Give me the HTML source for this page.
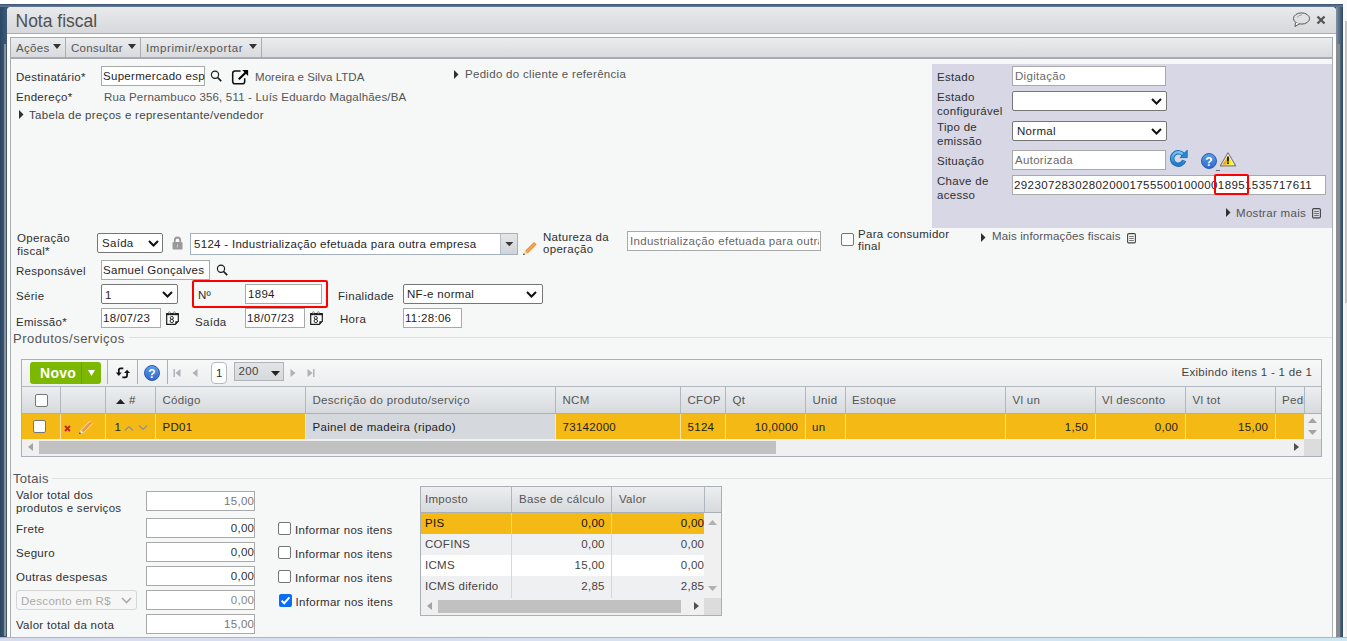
<!DOCTYPE html>
<html><head><meta charset="utf-8"><title>Nota fiscal</title>
<style>
html,body{margin:0;padding:0;}
body{width:1347px;height:641px;position:relative;overflow:hidden;font-family:"Liberation Sans",sans-serif;background:#fff;}
body>div{position:absolute;}
.t{white-space:nowrap;}
svg{display:block;}
</style></head><body>
<div style="left:0px;top:0px;width:1347px;height:641px;background:#fff;"></div>
<div style="left:0px;top:4px;width:1343px;height:633px;background:linear-gradient(90deg,#2b4766 0px,#3d5877 6px,#2b4766 100%);"></div>
<div style="left:0px;top:4px;width:1343px;height:3px;background:linear-gradient(180deg,#3b5574,#6a7d92);"></div>
<div style="left:4px;top:44px;width:2px;height:592px;background:#8f9194;"></div>
<div style="left:1336px;top:7px;width:7px;height:630px;background:linear-gradient(90deg,#8293a5,#2b4766);"></div>
<div style="left:1336px;top:44px;width:3.5px;height:593px;background:#8a8b8d;"></div>
<div style="left:1343px;top:0px;width:4px;height:641px;background:#fafafa;"></div>
<div style="left:1345px;top:21px;width:2px;height:620px;background:#efefef;"></div>
<div style="left:1345px;top:21px;width:2px;height:282px;background:#c4c4c4;"></div>
<div style="left:0px;top:637px;width:1347px;height:1px;background:#aeb5c0;"></div>
<div style="left:0px;top:638px;width:1347px;height:3px;background:linear-gradient(90deg,#d9dcef,#d6e2f1 50%,#cde8f3);"></div>
<div style="left:7px;top:7px;width:1329px;height:630px;background:#fff;border-radius:4px 4px 0 0;"></div>
<div style="left:7px;top:7px;width:1329px;height:26px;background:linear-gradient(180deg,#e9eaec,#d6d8db);border-radius:4px 4px 0 0;border-bottom:1px solid #a9adb3;"></div>
<div class="t" style="left:15.5px;top:11.44px;font-size:17.5px;line-height:21px;color:#505050;letter-spacing:0px;">Nota fiscal</div>
<div style="left:1292px;top:12px;width:19px;height:16px"><svg width="19" height="16" viewBox="0 0 19 16"><ellipse cx="9.5" cy="6.5" rx="8" ry="5.6" fill="none" stroke="#555" stroke-width="1"/><path d="M3.5 10.5 L3 14.5 L7.5 11.8" fill="#fff" stroke="#555" stroke-width="1"/><path d="M5 5.5 Q7 3 10 2.8" fill="none" stroke="#888" stroke-width="0.8"/></svg></div>
<div style="left:1316px;top:15px;width:10px;height:10px"><svg width="10" height="10" viewBox="0 0 10 10"><path d="M1.5 1.5 L8.5 8.5 M8.5 1.5 L1.5 8.5" stroke="#555" stroke-width="2.3"/></svg></div>
<div style="left:10px;top:37px;width:1323px;height:22px;background:linear-gradient(180deg,#ebecee,#d8dadd);border:1px solid #a6abb2;box-sizing:border-box;border-bottom-width:2px;"></div>
<div style="left:65px;top:38px;width:1px;height:19px;background:#a9aeb4;"></div>
<div style="left:140px;top:38px;width:1px;height:19px;background:#a9aeb4;"></div>
<div style="left:261px;top:38px;width:1px;height:19px;background:#a9aeb4;"></div>
<div class="t" style="left:16px;top:41.32px;font-size:11.5px;line-height:14px;color:#555;letter-spacing:0.3px;">Ações</div>
<div style="left:53px;top:44px;width:8px;height:5px"><svg width="8" height="5" viewBox="0 0 8 5"><path d="M0 0 L8 0 L4 5 Z" fill="#333"/></svg></div>
<div class="t" style="left:71px;top:41.32px;font-size:11.5px;line-height:14px;color:#555;letter-spacing:0.3px;">Consultar</div>
<div style="left:128px;top:44px;width:8px;height:5px"><svg width="8" height="5" viewBox="0 0 8 5"><path d="M0 0 L8 0 L4 5 Z" fill="#333"/></svg></div>
<div class="t" style="left:146px;top:41.32px;font-size:11.5px;line-height:14px;color:#555;letter-spacing:0.6px;">Imprimir/exportar</div>
<div style="left:249px;top:44px;width:8px;height:5px"><svg width="8" height="5" viewBox="0 0 8 5"><path d="M0 0 L8 0 L4 5 Z" fill="#333"/></svg></div>
<div style="left:10px;top:59px;width:1323px;height:578px;background:#f6f7f7;border-left:1px solid #a9aeb4;border-right:1px solid #a9aeb4;box-sizing:border-box;"></div>
<div class="t" style="left:16px;top:70.02px;font-size:11.5px;line-height:14px;color:#303030;letter-spacing:0.3px;">Destinatário*</div>
<div style="left:101px;top:66px;width:104px;height:20px;background:#fff;border:1px solid #a9a9a9;box-sizing:border-box;"></div>
<div class="t" style="left:103px;top:69.22px;font-size:11.5px;line-height:14px;color:#1e1e1e;letter-spacing:0.3px;">Supermercado esp</div>
<div style="left:210px;top:70px;width:12px;height:12px"><svg width="12" height="12" viewBox="0 0 12 12"><circle cx="5" cy="4.7" r="3.6" fill="none" stroke="#1a1a1a" stroke-width="1.15"/><path d="M7.6 7.5 L11.2 11.1" stroke="#1a1a1a" stroke-width="1.7"/></svg></div>
<div style="left:226px;top:64px;width:26px;height:24px"><svg width="26" height="24" viewBox="0 0 26 24"><path d="M14.6 7 H9 Q6.7 7 6.7 9.3 V17.4 Q6.7 19.7 9 19.7 H16.4 Q18.7 19.7 18.7 17.4 V14.2" fill="none" stroke="#111" stroke-width="1.55"/><path d="M12.8 15.3 L19.8 8.6" stroke="#000" stroke-width="2.1"/><path d="M16.2 6 H22.1 V12 Z" fill="#000"/></svg></div>
<div class="t" style="left:255px;top:70.02px;font-size:11.5px;line-height:14px;color:#555;letter-spacing:0.05px;">Moreira e Silva LTDA</div>
<div class="t" style="left:16px;top:90.02px;font-size:11.5px;line-height:14px;color:#303030;letter-spacing:0.3px;">Endereço*</div>
<div class="t" style="left:104px;top:90.02px;font-size:11.5px;line-height:14px;color:#555;letter-spacing:0.18px;">Rua Pernambuco 356, 511 - Luís Eduardo Magalhães/BA</div>
<div style="left:19px;top:110.3px;width:5px;height:9px"><svg width="5" height="9" viewBox="0 0 5 9"><path d="M0 0 L4.5 4.5 L0 9 Z" fill="#303030"/></svg></div>
<div class="t" style="left:29px;top:108.02px;font-size:11.5px;line-height:14px;color:#444;letter-spacing:0.3px;">Tabela de preços e representante/vendedor</div>
<div style="left:454px;top:70.3px;width:5px;height:9px"><svg width="5" height="9" viewBox="0 0 5 9"><path d="M0 0 L4.5 4.5 L0 9 Z" fill="#303030"/></svg></div>
<div class="t" style="left:465px;top:67.02px;font-size:11.5px;line-height:14px;color:#555;letter-spacing:0.3px;">Pedido do cliente e referência</div>
<div style="left:932px;top:64px;width:400px;height:164px;background:#d7d7e5;"></div>
<div class="t" style="left:937px;top:70.02px;font-size:11.5px;line-height:14px;color:#303030;letter-spacing:0.3px;">Estado</div>
<div style="left:1012px;top:66px;width:154px;height:20px;background:#fff;border:1px solid #a9a9a9;box-sizing:border-box;"></div>
<div class="t" style="left:1015px;top:69.02px;font-size:11.5px;line-height:14px;color:#6a6a6a;letter-spacing:0.3px;">Digitação</div>
<div class="t" style="left:937px;top:90.02px;font-size:11.5px;line-height:14px;color:#303030;letter-spacing:0.3px;">Estado</div>
<div class="t" style="left:937px;top:103.82px;font-size:11.5px;line-height:14px;color:#303030;letter-spacing:0.3px;">configurável</div>
<div style="left:1012px;top:91px;width:155px;height:20px;background:#fff;border:1px solid #767676;border-radius:2px;box-sizing:border-box;"></div>
<div style="left:1151px;top:97.5px;width:11px;height:7px"><svg width="11" height="7" viewBox="0 0 11 7"><path d="M1 1 L5.5 5.5 L10 1" fill="none" stroke="#111" stroke-width="2"/></svg></div>
<div class="t" style="left:937px;top:120.22px;font-size:11.5px;line-height:14px;color:#303030;letter-spacing:0.3px;">Tipo de</div>
<div class="t" style="left:937px;top:133.52px;font-size:11.5px;line-height:14px;color:#303030;letter-spacing:0.3px;">emissão</div>
<div style="left:1012px;top:121px;width:155px;height:20px;background:#fff;border:1px solid #767676;border-radius:2px;box-sizing:border-box;"></div>
<div style="left:1151px;top:127.5px;width:11px;height:7px"><svg width="11" height="7" viewBox="0 0 11 7"><path d="M1 1 L5.5 5.5 L10 1" fill="none" stroke="#111" stroke-width="2"/></svg></div>
<div class="t" style="left:1017px;top:124.02px;font-size:11.5px;line-height:14px;color:#1e1e1e;letter-spacing:0.3px;">Normal</div>
<div class="t" style="left:937px;top:154.02px;font-size:11.5px;line-height:14px;color:#303030;letter-spacing:0.3px;">Situação</div>
<div style="left:1012px;top:150px;width:154px;height:20px;background:#fff;border:1px solid #a9a9a9;box-sizing:border-box;"></div>
<div class="t" style="left:1015px;top:153.02px;font-size:11.5px;line-height:14px;color:#6a6a6a;letter-spacing:0.3px;">Autorizada</div>
<div style="left:1170px;top:149px;width:18px;height:18px"><svg width="18" height="18" viewBox="0 0 18 18"><defs><linearGradient id="rg" x1="0" y1="0" x2="0" y2="1"><stop offset="0" stop-color="#6cc4f4"/><stop offset="1" stop-color="#1f7ccc"/></linearGradient></defs><path d="M13.6 6.2 A6.2 6.2 0 1 0 14.2 11.6" fill="none" stroke="#1669b0" stroke-width="4.4"/><path d="M13.6 6.2 A6.2 6.2 0 1 0 14.2 11.6" fill="none" stroke="url(#rg)" stroke-width="2.6"/><path d="M10.2 8.6 L17.2 8.6 L17.2 1.2 Z" fill="#2a8ad8" stroke="#1669b0" stroke-width="0.9" stroke-linejoin="round"/></svg></div>
<div style="left:1201px;top:153px;width:16px;height:16px"><svg width="16" height="16" viewBox="0 0 16 16"><defs><linearGradient id="hga" x1="0" y1="0" x2="0" y2="1"><stop offset="0" stop-color="#5f9fe6"/><stop offset="1" stop-color="#2d68cc"/></linearGradient></defs><circle cx="8" cy="8" r="7.5" fill="url(#hga)" stroke="#2550b0" stroke-width="0.9"/><text x="8" y="12.6" font-family="Liberation Sans" font-weight="bold" font-size="12" fill="#fff" text-anchor="middle">?</text></svg></div>
<div style="left:1220px;top:151.5px;width:17px;height:15px"><svg width="17" height="15" viewBox="0 0 17 15"><defs><linearGradient id="wg" x1="0" y1="0" x2="1" y2="0"><stop offset="0.15" stop-color="#f0a000"/><stop offset="0.85" stop-color="#ffff10"/></linearGradient></defs><path d="M8 0.8 L15.7 13.9 H0.3 Z" fill="#fff" stroke="#7c7c7c" stroke-width="1.1" stroke-linejoin="round"/><path d="M8 3.4 L13.8 12.8 H2.2 Z" fill="url(#wg)"/><rect x="7.1" y="4.6" width="1.8" height="5" fill="#111"/><rect x="7.1" y="10.4" width="1.8" height="1.5" fill="#111"/></svg></div>
<div style="left:1216px;top:170px;width:4px;height:1px;background:#666;"></div>
<div class="t" style="left:937px;top:174.02px;font-size:11.5px;line-height:14px;color:#303030;letter-spacing:0.3px;">Chave de</div>
<div class="t" style="left:937px;top:187.82px;font-size:11.5px;line-height:14px;color:#303030;letter-spacing:0.3px;">acesso</div>
<div style="left:1012px;top:175px;width:314px;height:20px;background:#fff;border:1px solid #a9a9a9;box-sizing:border-box;"></div>
<div class="t" style="left:1014px;top:178.02px;font-size:11.5px;line-height:14px;color:#1e1e1e;letter-spacing:0.4px;">29230728302802000175550010000018951535717611</div>
<div style="left:1214px;top:174px;width:35px;height:21px;border:2.7px solid #ff0000;border-radius:2px;box-sizing:border-box;"></div>
<div style="left:1226px;top:208px;width:5px;height:9px"><svg width="5" height="9" viewBox="0 0 5 9"><path d="M0 0 L4.5 4.5 L0 9 Z" fill="#303030"/></svg></div>
<div class="t" style="left:1236px;top:205.52px;font-size:11.5px;line-height:14px;color:#555;letter-spacing:0.3px;">Mostrar mais</div>
<div style="left:1312px;top:208px;width:9px;height:11px"><svg width="9" height="11" viewBox="0 0 9 11"><rect x="0.6" y="0.6" width="7.8" height="9.3" rx="1.2" fill="none" stroke="#444" stroke-width="1.1"/><path d="M2.2 3.5 H6.8 M2.2 5.5 H6.8 M2.2 7.5 H6.8" stroke="#666" stroke-width="0.9"/></svg></div>
<div class="t" style="left:17px;top:231.02px;font-size:11.5px;line-height:14px;color:#303030;letter-spacing:0.3px;">Operação</div>
<div class="t" style="left:17px;top:244.32px;font-size:11.5px;line-height:14px;color:#303030;letter-spacing:0.3px;">fiscal*</div>
<div style="left:97px;top:233px;width:66px;height:20px;background:#fff;border:1px solid #767676;border-radius:2px;box-sizing:border-box;"></div>
<div style="left:148px;top:239.5px;width:11px;height:7px"><svg width="11" height="7" viewBox="0 0 11 7"><path d="M1 1 L5.5 5.5 L10 1" fill="none" stroke="#111" stroke-width="2"/></svg></div>
<div class="t" style="left:102px;top:236.02px;font-size:11.5px;line-height:14px;color:#1e1e1e;letter-spacing:0.3px;">Saída</div>
<div style="left:172px;top:236px;width:11px;height:14px"><svg width="11" height="14" viewBox="0 0 11 14"><path d="M2.8 6 V4.2 A2.7 2.7 0 0 1 8.2 4.2 V6" fill="none" stroke="#9a9a9a" stroke-width="1.8"/><rect x="0.5" y="6" width="10" height="7.5" rx="1.2" fill="#9a9a9a"/><rect x="5" y="8.5" width="1" height="3" fill="#ccc"/></svg></div>
<div style="left:190px;top:233px;width:328px;height:22px;background:#fff;border:1px solid #a5b0bd;box-sizing:border-box;"></div>
<div class="t" style="left:194px;top:236.52px;font-size:11.5px;line-height:14px;color:#1e1e1e;letter-spacing:0.3px;">5124 - Industrialização efetuada para outra empresa</div>
<div style="left:500px;top:234px;width:17px;height:20px;background:linear-gradient(180deg,#e4e6e9,#d0d3d7);border-left:1px solid #b5bcc5;box-sizing:border-box;"></div>
<div style="left:504.5px;top:242px;width:9px;height:5px"><svg width="9" height="5" viewBox="0 0 9 5"><path d="M0.3 0 H8.3 L4.3 4.2 Z" fill="#383838"/></svg></div>
<div style="left:522px;top:241px;width:15px;height:15px"><svg width="15" height="15" viewBox="0 0 15 15"><path d="M4.3 11.3 L13.3 2.3" stroke="#e8892a" stroke-width="3.6" stroke-linecap="butt"/><path d="M4.3 11.3 L13.3 2.3" stroke="#f6ab55" stroke-width="1.6"/><path d="M1.3 13.9 L2.6 10.1 L5.5 12.9 Z" fill="#f3dcb0"/><circle cx="1.9" cy="13.3" r="0.8" fill="#222"/></svg></div>
<div class="t" style="left:543px;top:230.02px;font-size:11.5px;line-height:14px;color:#303030;letter-spacing:0.3px;">Natureza da</div>
<div class="t" style="left:543px;top:241.52px;font-size:11.5px;line-height:14px;color:#303030;letter-spacing:0.3px;">operação</div>
<div style="left:627px;top:231px;width:194px;height:20px;background:#fff;border:1px solid #a9a9a9;box-sizing:border-box;"></div>
<div class="t" style="left:630px;top:233.5px;width:189px;overflow:hidden;font-size:11.5px;line-height:14px;letter-spacing:0.3px;color:#666;white-space:nowrap">Industrialização efetuada para outra</div>
<div style="left:841px;top:233px;width:13px;height:13px;background:#fff;border:1px solid #767676;border-radius:2px;box-sizing:border-box;"></div>
<div class="t" style="left:858px;top:227.02px;font-size:11.5px;line-height:14px;color:#303030;letter-spacing:0.3px;">Para consumidor</div>
<div class="t" style="left:858px;top:239.02px;font-size:11.5px;line-height:14px;color:#303030;letter-spacing:0.3px;">final</div>
<div style="left:981px;top:232.5px;width:5px;height:9px"><svg width="5" height="9" viewBox="0 0 5 9"><path d="M0 0 L4.5 4.5 L0 9 Z" fill="#303030"/></svg></div>
<div class="t" style="left:992px;top:228.52px;font-size:11.5px;line-height:14px;color:#555;letter-spacing:0.14px;">Mais informações fiscais</div>
<div style="left:1127px;top:233px;width:9px;height:11px"><svg width="9" height="11" viewBox="0 0 9 11"><rect x="0.6" y="0.6" width="7.8" height="9.3" rx="1.2" fill="none" stroke="#444" stroke-width="1.1"/><path d="M2.2 3.5 H6.8 M2.2 5.5 H6.8 M2.2 7.5 H6.8" stroke="#666" stroke-width="0.9"/></svg></div>
<div class="t" style="left:16px;top:263.52px;font-size:11.5px;line-height:14px;color:#303030;letter-spacing:0.3px;">Responsável</div>
<div style="left:101px;top:260px;width:109px;height:20px;background:#fff;border:1px solid #a9a9a9;box-sizing:border-box;"></div>
<div class="t" style="left:103px;top:263.02px;font-size:11.5px;line-height:14px;color:#1e1e1e;letter-spacing:0.3px;">Samuel Gonçalves</div>
<div style="left:216px;top:264px;width:12px;height:12px"><svg width="12" height="12" viewBox="0 0 12 12"><circle cx="5" cy="4.7" r="3.6" fill="none" stroke="#1a1a1a" stroke-width="1.15"/><path d="M7.6 7.5 L11.2 11.1" stroke="#1a1a1a" stroke-width="1.7"/></svg></div>
<div class="t" style="left:16px;top:288.52px;font-size:11.5px;line-height:14px;color:#303030;letter-spacing:0.3px;">Série</div>
<div style="left:101px;top:284px;width:77px;height:20px;background:#fff;border:1px solid #767676;border-radius:2px;box-sizing:border-box;"></div>
<div style="left:162px;top:290.5px;width:11px;height:7px"><svg width="11" height="7" viewBox="0 0 11 7"><path d="M1 1 L5.5 5.5 L10 1" fill="none" stroke="#111" stroke-width="2"/></svg></div>
<div class="t" style="left:105px;top:287.52px;font-size:11.5px;line-height:14px;color:#1e1e1e;letter-spacing:0.3px;">1</div>
<div style="left:192px;top:280px;width:136px;height:28px;border:2.7px solid #ff0000;border-radius:2px;box-sizing:border-box;"></div>
<div class="t" style="left:198px;top:288.02px;font-size:11.5px;line-height:14px;color:#303030;letter-spacing:0.3px;">Nº</div>
<div style="left:245px;top:284px;width:77px;height:20px;background:#fff;border:1px solid #a9a9a9;box-sizing:border-box;"></div>
<div class="t" style="left:248px;top:287.02px;font-size:11.5px;line-height:14px;color:#1e1e1e;letter-spacing:0.3px;">1894</div>
<div class="t" style="left:338px;top:289.02px;font-size:11.5px;line-height:14px;color:#303030;letter-spacing:0.3px;">Finalidade</div>
<div style="left:403px;top:284px;width:140px;height:20px;background:#fff;border:1px solid #767676;border-radius:2px;box-sizing:border-box;"></div>
<div style="left:526px;top:290.5px;width:11px;height:7px"><svg width="11" height="7" viewBox="0 0 11 7"><path d="M1 1 L5.5 5.5 L10 1" fill="none" stroke="#111" stroke-width="2"/></svg></div>
<div class="t" style="left:407px;top:287.02px;font-size:11.5px;line-height:14px;color:#1e1e1e;letter-spacing:0.3px;">NF-e normal</div>
<div class="t" style="left:16px;top:314.52px;font-size:11.5px;line-height:14px;color:#303030;letter-spacing:0.3px;">Emissão*</div>
<div style="left:101px;top:308px;width:60px;height:20px;background:#fff;border:1px solid #a9a9a9;box-sizing:border-box;"></div>
<div class="t" style="left:103px;top:311.02px;font-size:11.5px;line-height:14px;color:#1e1e1e;letter-spacing:0.3px;">18/07/23</div>
<div style="left:165.5px;top:311px;width:13px;height:14px"><svg width="13" height="14" viewBox="0 0 13 14"><path d="M0.7 3 V13.3 H9.3 L12.3 10.3 V3" fill="#fff" stroke="#1e1e1e" stroke-width="1.2"/><rect x="0.1" y="2" width="12.8" height="2.2" fill="#1e1e1e"/><circle cx="3.4" cy="1.6" r="0.9" fill="#fff" stroke="#555" stroke-width="0.6"/><circle cx="8.4" cy="1.6" r="0.9" fill="#fff" stroke="#555" stroke-width="0.6"/><path d="M9.3 13.3 V10.3 H12.3 Z" fill="#1e1e1e"/><ellipse cx="5.8" cy="6.9" rx="1.6" ry="1.45" fill="none" stroke="#222" stroke-width="0.95"/><ellipse cx="5.8" cy="10" rx="1.75" ry="1.6" fill="none" stroke="#222" stroke-width="0.95"/></svg></div>
<div class="t" style="left:195px;top:314.52px;font-size:11.5px;line-height:14px;color:#303030;letter-spacing:0.3px;">Saída</div>
<div style="left:245px;top:308px;width:60px;height:20px;background:#fff;border:1px solid #a9a9a9;box-sizing:border-box;"></div>
<div class="t" style="left:247px;top:311.02px;font-size:11.5px;line-height:14px;color:#1e1e1e;letter-spacing:0.3px;">18/07/23</div>
<div style="left:309.5px;top:311px;width:13px;height:14px"><svg width="13" height="14" viewBox="0 0 13 14"><path d="M0.7 3 V13.3 H9.3 L12.3 10.3 V3" fill="#fff" stroke="#1e1e1e" stroke-width="1.2"/><rect x="0.1" y="2" width="12.8" height="2.2" fill="#1e1e1e"/><circle cx="3.4" cy="1.6" r="0.9" fill="#fff" stroke="#555" stroke-width="0.6"/><circle cx="8.4" cy="1.6" r="0.9" fill="#fff" stroke="#555" stroke-width="0.6"/><path d="M9.3 13.3 V10.3 H12.3 Z" fill="#1e1e1e"/><ellipse cx="5.8" cy="6.9" rx="1.6" ry="1.45" fill="none" stroke="#222" stroke-width="0.95"/><ellipse cx="5.8" cy="10" rx="1.75" ry="1.6" fill="none" stroke="#222" stroke-width="0.95"/></svg></div>
<div class="t" style="left:340px;top:312.32px;font-size:11.5px;line-height:14px;color:#303030;letter-spacing:0.3px;">Hora</div>
<div style="left:403px;top:308px;width:59px;height:20px;background:#fff;border:1px solid #a9a9a9;box-sizing:border-box;"></div>
<div class="t" style="left:405px;top:311.02px;font-size:11.5px;line-height:14px;color:#1e1e1e;letter-spacing:0.3px;">11:28:06</div>
<div class="t" style="left:13px;top:331.00px;font-size:13px;line-height:16px;color:#555;letter-spacing:0.5px;">Produtos/serviços</div>
<div style="left:129px;top:337px;width:1203px;height:1px;background:#dcdee0;"></div>
<div style="left:21px;top:359px;width:1301px;height:98px;background:#f2f3f4;border:1px solid #a9b0b8;box-sizing:border-box;"></div>
<div style="left:22px;top:360px;width:1299px;height:26px;background:linear-gradient(180deg,#f7f8f8,#eceeef);"></div>
<div style="left:30px;top:362px;width:71px;height:22px;background:#7cb800;border-radius:3px;"></div>
<div style="left:81px;top:362px;width:1px;height:22px;background:#6aa000;"></div>
<div class="t" style="left:40px;top:364.65px;font-size:14px;line-height:17px;color:#fff;letter-spacing:0.3px;font-weight:bold;">Novo</div>
<div style="left:88px;top:370px;width:7px;height:6px"><svg width="7" height="6" viewBox="0 0 7 6"><path d="M0 0 H7 L3.5 6 Z" fill="#fff"/></svg></div>
<div style="left:107px;top:360px;width:1px;height:24px;background:#aab0b6;"></div>
<div style="left:137px;top:360px;width:1px;height:24px;background:#aab0b6;"></div>
<div style="left:167px;top:360px;width:1px;height:24px;background:#aab0b6;"></div>
<div style="left:114px;top:366px;width:17px;height:13px"><svg width="17" height="13" viewBox="0 0 17 13"><path d="M4.8 7 V4.3 Q4.8 2.4 6.7 2.4 H9.3" fill="none" stroke="#111" stroke-width="1.7"/><path d="M1.9 6.6 H7.7 L4.8 9.9 Z" fill="#111"/><path d="M13.1 6.4 V9.3 Q13.1 11.3 11.2 11.3 H8.3" fill="none" stroke="#111" stroke-width="1.7"/><path d="M10.1 7 H16 L13.1 3.8 Z" fill="#111"/></svg></div>
<div style="left:144px;top:365px;width:16px;height:16px"><svg width="16" height="16" viewBox="0 0 16 16"><defs><linearGradient id="hgb" x1="0" y1="0" x2="0" y2="1"><stop offset="0" stop-color="#5f9fe6"/><stop offset="1" stop-color="#2d68cc"/></linearGradient></defs><circle cx="8" cy="8" r="7.5" fill="url(#hgb)" stroke="#2550b0" stroke-width="0.9"/><text x="8" y="12.6" font-family="Liberation Sans" font-weight="bold" font-size="12" fill="#fff" text-anchor="middle">?</text></svg></div>
<div style="left:173px;top:369px;width:8px;height:8px"><svg width="8" height="8" viewBox="0 0 8 8"><rect x="0.5" y="0" width="1.4" height="8" fill="#a9b1b9"/><path d="M7.5 0 V8 L2.5 4 Z" fill="#a9b1b9"/></svg></div>
<div style="left:192px;top:369px;width:6px;height:8px"><svg width="6" height="8" viewBox="0 0 6 8"><path d="M5.5 0 V8 L0.5 4 Z" fill="#a9b1b9"/></svg></div>
<div style="left:211px;top:362px;width:16px;height:22px;background:#fff;border:1px solid #b4bac1;border-radius:4px;box-sizing:border-box;"></div>
<div class="t" style="left:216px;top:366.02px;font-size:11.5px;line-height:14px;color:#333;letter-spacing:0.3px;">1</div>
<div style="left:234px;top:362px;width:50px;height:19px;background:linear-gradient(180deg,#e2e4e6,#d6d9dc);border:1px solid #aeb4ba;box-sizing:border-box;"></div>
<div class="t" style="left:238.5px;top:364.02px;font-size:11.5px;line-height:14px;color:#444;letter-spacing:0.3px;">200</div>
<div style="left:271px;top:371px;width:9px;height:5px"><svg width="9" height="5" viewBox="0 0 9 5"><path d="M0 0 H9 L4.5 5 Z" fill="#222"/></svg></div>
<div style="left:290px;top:369px;width:6px;height:8px"><svg width="6" height="8" viewBox="0 0 6 8"><path d="M0.5 0 V8 L5.5 4 Z" fill="#a9b1b9"/></svg></div>
<div style="left:307px;top:369px;width:8px;height:8px"><svg width="8" height="8" viewBox="0 0 8 8"><path d="M0.5 0 V8 L5.5 4 Z" fill="#a9b1b9"/><rect x="6.1" y="0" width="1.4" height="8" fill="#a9b1b9"/></svg></div>
<div class="t" style="right:34.70px;top:364.52px;font-size:11.5px;line-height:14px;color:#444;text-align:right;letter-spacing:0.3px;">Exibindo itens 1 - 1 de 1</div>
<div style="left:22px;top:386px;width:1299px;height:28px;background:linear-gradient(180deg,#eceef0,#d7dadd);border-top:1px solid #b4bac1;border-bottom:1px solid #a9b0b8;box-sizing:border-box;"></div>
<div style="left:60px;top:386px;width:1px;height:27px;background:#b0b7bf;"></div>
<div style="left:105px;top:386px;width:1px;height:27px;background:#b0b7bf;"></div>
<div style="left:155px;top:386px;width:1px;height:27px;background:#b0b7bf;"></div>
<div style="left:305px;top:386px;width:1px;height:27px;background:#b0b7bf;"></div>
<div style="left:555px;top:386px;width:1px;height:27px;background:#b0b7bf;"></div>
<div style="left:680px;top:386px;width:1px;height:27px;background:#b0b7bf;"></div>
<div style="left:725px;top:386px;width:1px;height:27px;background:#b0b7bf;"></div>
<div style="left:805px;top:386px;width:1px;height:27px;background:#b0b7bf;"></div>
<div style="left:845px;top:386px;width:1px;height:27px;background:#b0b7bf;"></div>
<div style="left:1005px;top:386px;width:1px;height:27px;background:#b0b7bf;"></div>
<div style="left:1095px;top:386px;width:1px;height:27px;background:#b0b7bf;"></div>
<div style="left:1185px;top:386px;width:1px;height:27px;background:#b0b7bf;"></div>
<div style="left:1275px;top:386px;width:1px;height:27px;background:#b0b7bf;"></div>
<div style="left:1304px;top:386px;width:1px;height:27px;background:#b0b7bf;"></div>
<div style="left:35px;top:394px;width:13px;height:13px;background:#fff;border:1px solid #767676;border-radius:2px;box-sizing:border-box;"></div>
<div style="left:116px;top:399px;width:9px;height:5px"><svg width="9" height="5" viewBox="0 0 9 5"><path d="M0 5 L4.5 0 L9 5 Z" fill="#222"/></svg></div>
<div class="t" style="left:129px;top:393.02px;font-size:11.5px;line-height:14px;color:#444;letter-spacing:0.3px;">#</div>
<div class="t" style="left:162.5px;top:393.02px;font-size:11.5px;line-height:14px;color:#555;letter-spacing:0.3px;">Código</div>
<div class="t" style="left:312.5px;top:393.02px;font-size:11.5px;line-height:14px;color:#555;letter-spacing:0.3px;">Descrição do produto/serviço</div>
<div class="t" style="left:562.5px;top:393.02px;font-size:11.5px;line-height:14px;color:#555;letter-spacing:0.3px;">NCM</div>
<div class="t" style="left:687.5px;top:393.02px;font-size:11.5px;line-height:14px;color:#555;letter-spacing:0.3px;">CFOP</div>
<div class="t" style="left:732.5px;top:393.02px;font-size:11.5px;line-height:14px;color:#555;letter-spacing:0.3px;">Qt</div>
<div class="t" style="left:812.5px;top:393.02px;font-size:11.5px;line-height:14px;color:#555;letter-spacing:0.3px;">Unid</div>
<div class="t" style="left:852px;top:393.02px;font-size:11.5px;line-height:14px;color:#555;letter-spacing:0.3px;">Estoque</div>
<div class="t" style="left:1012.5px;top:393.02px;font-size:11.5px;line-height:14px;color:#555;letter-spacing:0.3px;">Vl un</div>
<div class="t" style="left:1102px;top:393.02px;font-size:11.5px;line-height:14px;color:#555;letter-spacing:0.3px;">Vl desconto</div>
<div class="t" style="left:1192.5px;top:393.02px;font-size:11.5px;line-height:14px;color:#555;letter-spacing:0.3px;">Vl tot</div>
<div class="t" style="left:1282px;top:393px;width:22px;overflow:hidden;font-size:11.5px;line-height:14px;letter-spacing:0.3px;color:#555;white-space:nowrap">Pedido</div>
<div style="left:22px;top:414px;width:1282px;height:25px;background:#f4b915;"></div>
<div style="left:305px;top:414px;width:250px;height:25px;background:#d5d8dc;"></div>
<div style="left:60px;top:414px;width:1px;height:25px;background:#f7e2a4;"></div>
<div style="left:105px;top:414px;width:1px;height:25px;background:#f7e2a4;"></div>
<div style="left:155px;top:414px;width:1px;height:25px;background:#f7e2a4;"></div>
<div style="left:305px;top:414px;width:1px;height:25px;background:#f7e2a4;"></div>
<div style="left:555px;top:414px;width:1px;height:25px;background:#f7e2a4;"></div>
<div style="left:680px;top:414px;width:1px;height:25px;background:#f7e2a4;"></div>
<div style="left:725px;top:414px;width:1px;height:25px;background:#f7e2a4;"></div>
<div style="left:805px;top:414px;width:1px;height:25px;background:#f7e2a4;"></div>
<div style="left:845px;top:414px;width:1px;height:25px;background:#f7e2a4;"></div>
<div style="left:1005px;top:414px;width:1px;height:25px;background:#f7e2a4;"></div>
<div style="left:1095px;top:414px;width:1px;height:25px;background:#f7e2a4;"></div>
<div style="left:1185px;top:414px;width:1px;height:25px;background:#f7e2a4;"></div>
<div style="left:1275px;top:414px;width:1px;height:25px;background:#f7e2a4;"></div>
<div style="left:305px;top:414px;width:1px;height:25px;background:#e8eaed;"></div>
<div style="left:555px;top:414px;width:1px;height:25px;background:#e8eaed;"></div>
<div style="left:33px;top:420px;width:13px;height:13px;background:#fff;border:1px solid #767676;border-radius:2px;box-sizing:border-box;"></div>
<div style="left:64px;top:425px;width:7px;height:7px"><svg width="7" height="7" viewBox="0 0 7 7"><path d="M1 1 L6 6 M6 1 L1 6" stroke="#c42727" stroke-width="1.9"/></svg></div>
<div style="left:77.5px;top:419.5px;width:15px;height:15px"><svg width="15" height="15" viewBox="0 0 15 15"><path d="M4.3 11.3 L13.3 2.3" stroke="#fbe3c0" stroke-width="4.4"/><path d="M4.3 11.3 L13.3 2.3" stroke="#ec9a3e" stroke-width="2.8"/><path d="M1.3 13.9 L2.6 10.1 L5.5 12.9 Z" fill="#f6e2bd"/><circle cx="1.9" cy="13.3" r="0.8" fill="#222"/></svg></div>
<div class="t" style="left:114.5px;top:420.02px;font-size:11.5px;line-height:14px;color:#1e1e1e;letter-spacing:0.3px;">1</div>
<div style="left:124px;top:425px;width:10px;height:6px"><svg width="10" height="6" viewBox="0 0 10 6"><path d="M1 5.5 L5 1.5 L9 5.5" fill="none" stroke="#8f9094" stroke-width="1.2"/></svg></div>
<div style="left:138px;top:425px;width:10px;height:6px"><svg width="10" height="6" viewBox="0 0 10 6"><path d="M1 0.5 L5 4.5 L9 0.5" fill="none" stroke="#8f9094" stroke-width="1.2"/></svg></div>
<div class="t" style="left:162.5px;top:420.32px;font-size:11.5px;line-height:14px;color:#1e1e1e;letter-spacing:0.3px;">PD01</div>
<div class="t" style="left:312.5px;top:420.32px;font-size:11.5px;line-height:14px;color:#1e1e1e;letter-spacing:0.3px;">Painel de madeira (ripado)</div>
<div class="t" style="left:562.5px;top:420.32px;font-size:11.5px;line-height:14px;color:#1e1e1e;letter-spacing:0.3px;">73142000</div>
<div class="t" style="left:687.5px;top:420.32px;font-size:11.5px;line-height:14px;color:#1e1e1e;letter-spacing:0.3px;">5124</div>
<div class="t" style="right:548.70px;top:420.32px;font-size:11.5px;line-height:14px;color:#1e1e1e;text-align:right;letter-spacing:0.3px;">10,0000</div>
<div class="t" style="left:812px;top:420.32px;font-size:11.5px;line-height:14px;color:#1e1e1e;letter-spacing:0.3px;">un</div>
<div class="t" style="right:258.70px;top:420.32px;font-size:11.5px;line-height:14px;color:#1e1e1e;text-align:right;letter-spacing:0.3px;">1,50</div>
<div class="t" style="right:168.70px;top:420.32px;font-size:11.5px;line-height:14px;color:#1e1e1e;text-align:right;letter-spacing:0.3px;">0,00</div>
<div class="t" style="right:78.70px;top:420.32px;font-size:11.5px;line-height:14px;color:#1e1e1e;text-align:right;letter-spacing:0.3px;">15,00</div>
<div style="left:1304px;top:414px;width:17px;height:25px;background:#f0f0f0;"></div>
<div style="left:1308px;top:418px;width:9px;height:5px"><svg width="9" height="5" viewBox="0 0 9 5"><path d="M0 5 L4.5 0 L9 5 Z" fill="#a3a3a3"/></svg></div>
<div style="left:1308px;top:430px;width:9px;height:5px"><svg width="9" height="5" viewBox="0 0 9 5"><path d="M0 0 L4.5 5 L9 0 Z" fill="#a3a3a3"/></svg></div>
<div style="left:22px;top:439px;width:1282px;height:17px;background:#f0f0f0;"></div>
<div style="left:39px;top:441px;width:737px;height:13px;background:#c1c1c1;"></div>
<div style="left:28px;top:443px;width:5px;height:8px"><svg width="5" height="8" viewBox="0 0 5 8"><path d="M5 0 V8 L0 4 Z" fill="#a3a3a3"/></svg></div>
<div style="left:1294px;top:443px;width:5px;height:8px"><svg width="5" height="8" viewBox="0 0 5 8"><path d="M0 0 V8 L5 4 Z" fill="#505050"/></svg></div>
<div style="left:1304px;top:439px;width:17px;height:17px;background:#dcdcdc;"></div>
<div class="t" style="left:13px;top:470.50px;font-size:13px;line-height:16px;color:#555;letter-spacing:0.3px;">Totais</div>
<div style="left:52px;top:478px;width:1280px;height:1px;background:#dfe1e3;"></div>
<div class="t" style="left:16px;top:488.02px;font-size:11.5px;line-height:14px;color:#303030;letter-spacing:0.3px;">Valor total dos</div>
<div class="t" style="left:16px;top:501.02px;font-size:11.5px;line-height:14px;color:#303030;letter-spacing:0.3px;">produtos e serviços</div>
<div style="left:146px;top:491px;width:109px;height:20px;background:#fff;border:1px solid #a9a9a9;box-sizing:border-box;"></div>
<div class="t" style="right:1092.70px;top:494.02px;font-size:11.5px;line-height:14px;color:#777;text-align:right;letter-spacing:0.3px;">15,00</div>
<div class="t" style="left:16px;top:522.02px;font-size:11.5px;line-height:14px;color:#303030;letter-spacing:0.3px;">Frete</div>
<div style="left:146px;top:518px;width:109px;height:20px;background:#fff;border:1px solid #a9a9a9;box-sizing:border-box;"></div>
<div class="t" style="right:1092.70px;top:521.02px;font-size:11.5px;line-height:14px;color:#303030;text-align:right;letter-spacing:0.3px;">0,00</div>
<div class="t" style="left:16px;top:546.02px;font-size:11.5px;line-height:14px;color:#303030;letter-spacing:0.3px;">Seguro</div>
<div style="left:146px;top:542px;width:109px;height:20px;background:#fff;border:1px solid #a9a9a9;box-sizing:border-box;"></div>
<div class="t" style="right:1092.70px;top:545.02px;font-size:11.5px;line-height:14px;color:#303030;text-align:right;letter-spacing:0.3px;">0,00</div>
<div class="t" style="left:16px;top:570.02px;font-size:11.5px;line-height:14px;color:#303030;letter-spacing:0.3px;">Outras despesas</div>
<div style="left:146px;top:566px;width:109px;height:20px;background:#fff;border:1px solid #a9a9a9;box-sizing:border-box;"></div>
<div class="t" style="right:1092.70px;top:569.02px;font-size:11.5px;line-height:14px;color:#303030;text-align:right;letter-spacing:0.3px;">0,00</div>
<div style="left:16px;top:590px;width:121px;height:20px;background:#f6f6f6;border:1px solid #d6d6d6;border-radius:3px;box-sizing:border-box;"></div>
<div class="t" style="left:21px;top:594.02px;font-size:11.5px;line-height:14px;color:#aaa;letter-spacing:0.3px;">Desconto em R$</div>
<div style="left:121px;top:596.5px;width:11px;height:7px"><svg width="11" height="7" viewBox="0 0 11 7"><path d="M1 1 L5.5 5.5 L10 1" fill="none" stroke="#aaa" stroke-width="1.6"/></svg></div>
<div style="left:146px;top:590px;width:109px;height:20px;background:#fff;border:1px solid #a9a9a9;box-sizing:border-box;"></div>
<div class="t" style="right:1092.70px;top:593.02px;font-size:11.5px;line-height:14px;color:#888;text-align:right;letter-spacing:0.3px;">0,00</div>
<div class="t" style="left:16px;top:618.02px;font-size:11.5px;line-height:14px;color:#303030;letter-spacing:0.3px;">Valor total da nota</div>
<div style="left:146px;top:614px;width:109px;height:20px;background:#fff;border:1px solid #a9a9a9;box-sizing:border-box;"></div>
<div class="t" style="right:1092.70px;top:617.02px;font-size:11.5px;line-height:14px;color:#777;text-align:right;letter-spacing:0.3px;">15,00</div>
<div style="left:278px;top:522px;width:13px;height:13px;background:#fff;border:1px solid #767676;border-radius:2px;box-sizing:border-box;"></div>
<div class="t" style="left:295px;top:523.02px;font-size:11.5px;line-height:14px;color:#303030;letter-spacing:0.3px;">Informar nos itens</div>
<div style="left:278px;top:546px;width:13px;height:13px;background:#fff;border:1px solid #767676;border-radius:2px;box-sizing:border-box;"></div>
<div class="t" style="left:295px;top:546.62px;font-size:11.5px;line-height:14px;color:#303030;letter-spacing:0.3px;">Informar nos itens</div>
<div style="left:278px;top:570px;width:13px;height:13px;background:#fff;border:1px solid #767676;border-radius:2px;box-sizing:border-box;"></div>
<div class="t" style="left:295px;top:570.52px;font-size:11.5px;line-height:14px;color:#303030;letter-spacing:0.3px;">Informar nos itens</div>
<div style="left:279px;top:594px;width:13px;height:13px;background:#0b6cf5;border-radius:2px"><svg width="13" height="13" viewBox="0 0 13 13"><path d="M2.6 6.6 L5.2 9.2 L10.4 3.4" fill="none" stroke="#fff" stroke-width="2"/></svg></div>
<div class="t" style="left:295.5px;top:594.62px;font-size:11.5px;line-height:14px;color:#303030;letter-spacing:0.3px;">Informar nos itens</div>
<div style="left:420px;top:486px;width:302px;height:130px;background:#f0f0f0;border:1px solid #a9b0b8;box-sizing:border-box;"></div>
<div style="left:421px;top:487px;width:300px;height:26px;background:linear-gradient(180deg,#eceef0,#d7dadd);border-bottom:1px solid #a9b0b8;box-sizing:border-box;"></div>
<div style="left:511px;top:487px;width:1px;height:25px;background:#b0b7bf;"></div>
<div style="left:611px;top:487px;width:1px;height:25px;background:#b0b7bf;"></div>
<div style="left:704px;top:487px;width:1px;height:25px;background:#b0b7bf;"></div>
<div class="t" style="left:425px;top:492.02px;font-size:11.5px;line-height:14px;color:#555;letter-spacing:0.3px;">Imposto</div>
<div class="t" style="left:519px;top:492.02px;font-size:11.5px;line-height:14px;color:#555;letter-spacing:0.3px;">Base de cálculo</div>
<div class="t" style="left:619px;top:492.02px;font-size:11.5px;line-height:14px;color:#555;letter-spacing:0.3px;">Valor</div>
<div style="left:421px;top:513px;width:283px;height:21px;background:#f4b915;"></div>
<div class="t" style="left:425px;top:516.02px;font-size:11.5px;line-height:14px;color:#111;letter-spacing:0.3px;">PIS</div>
<div class="t" style="right:742.20px;top:516.02px;font-size:11.5px;line-height:14px;color:#111;text-align:right;letter-spacing:0.3px;">0,00</div>
<div class="t" style="left:612px;top:515.84px;width:92px;height:16px;overflow:hidden;font-size:11.5px;line-height:14px;letter-spacing:0.3px;color:#111;white-space:nowrap"><span style="position:absolute;right:-0.3px;top:0">0,00</span></div>
<div style="left:421px;top:534px;width:283px;height:21px;background:#eff0f2;"></div>
<div class="t" style="left:425px;top:537.02px;font-size:11.5px;line-height:14px;color:#444;letter-spacing:0.3px;">COFINS</div>
<div class="t" style="right:742.20px;top:537.02px;font-size:11.5px;line-height:14px;color:#444;text-align:right;letter-spacing:0.3px;">0,00</div>
<div class="t" style="left:612px;top:536.84px;width:92px;height:16px;overflow:hidden;font-size:11.5px;line-height:14px;letter-spacing:0.3px;color:#444;white-space:nowrap"><span style="position:absolute;right:-0.3px;top:0">0,00</span></div>
<div style="left:421px;top:555px;width:283px;height:21px;background:#ffffff;"></div>
<div class="t" style="left:425px;top:558.02px;font-size:11.5px;line-height:14px;color:#444;letter-spacing:0.3px;">ICMS</div>
<div class="t" style="right:742.20px;top:558.02px;font-size:11.5px;line-height:14px;color:#444;text-align:right;letter-spacing:0.3px;">15,00</div>
<div class="t" style="left:612px;top:557.84px;width:92px;height:16px;overflow:hidden;font-size:11.5px;line-height:14px;letter-spacing:0.3px;color:#444;white-space:nowrap"><span style="position:absolute;right:-0.3px;top:0">0,00</span></div>
<div style="left:421px;top:576px;width:283px;height:22px;background:#eff0f2;"></div>
<div class="t" style="left:425px;top:579.02px;font-size:11.5px;line-height:14px;color:#444;letter-spacing:0.3px;">ICMS diferido</div>
<div class="t" style="right:742.20px;top:579.02px;font-size:11.5px;line-height:14px;color:#444;text-align:right;letter-spacing:0.3px;">2,85</div>
<div class="t" style="left:612px;top:578.84px;width:92px;height:16px;overflow:hidden;font-size:11.5px;line-height:14px;letter-spacing:0.3px;color:#444;white-space:nowrap"><span style="position:absolute;right:-0.3px;top:0">2,85</span></div>
<div style="left:511px;top:513px;width:1px;height:85px;background:#d4d7db;"></div>
<div style="left:611px;top:513px;width:1px;height:85px;background:#d4d7db;"></div>
<div style="left:708px;top:520px;width:9px;height:5px"><svg width="9" height="5" viewBox="0 0 9 5"><path d="M0 5 L4.5 0 L9 5 Z" fill="#b0b0b0"/></svg></div>
<div style="left:708px;top:586px;width:9px;height:5px"><svg width="9" height="5" viewBox="0 0 9 5"><path d="M0 0 L4.5 5 L9 0 Z" fill="#b0b0b0"/></svg></div>
<div style="left:421px;top:598px;width:283px;height:17px;background:#f0f0f0;"></div>
<div style="left:438px;top:600px;width:243px;height:13px;background:#c1c1c1;"></div>
<div style="left:427px;top:602px;width:5px;height:8px"><svg width="5" height="8" viewBox="0 0 5 8"><path d="M5 0 V8 L0 4 Z" fill="#a3a3a3"/></svg></div>
<div style="left:694px;top:602px;width:5px;height:8px"><svg width="5" height="8" viewBox="0 0 5 8"><path d="M0 0 V8 L5 4 Z" fill="#505050"/></svg></div>
<div style="left:704px;top:598px;width:17px;height:17px;background:#dcdcdc;"></div>
</body></html>
